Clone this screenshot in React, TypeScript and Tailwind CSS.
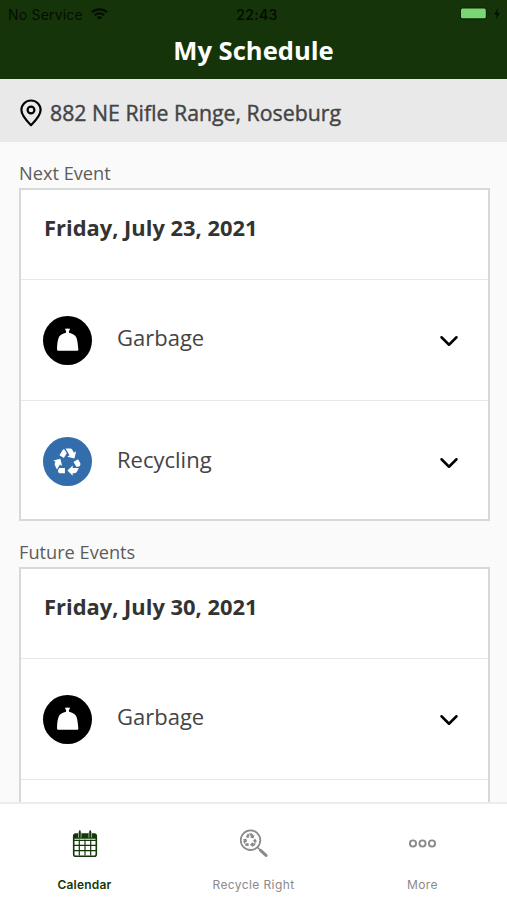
import type { ReactNode } from "react"
import { ChevronDown } from "lucide-react"
import { MdRecycling } from "react-icons/md"

type Service = "garbage" | "recycling"

interface ScheduleDay {
  date: string
  services: Service[]
}

const nextEvent: ScheduleDay = {
  date: "Friday, July 23, 2021",
  services: ["garbage", "recycling"],
}

const futureEvent: ScheduleDay = {
  date: "Friday, July 30, 2021",
  services: ["garbage"],
}

function GarbageBag() {
  return (
    <svg width="24" height="24" viewBox="0 0 24 24" fill="white">
      <path d="M8.8 0.4Q10.2 1 11.5 0.6Q12.8 1 14.2 0.4L12.9 3.4L13.1 4.8C15 5.7 18 6.1 19.8 8.4C21.6 11.2 21.9 17 22.4 21.2Q22.4 22.7 21.2 22.7H2.2Q1 22.7 1 21.2C1.1 17 1.5 11.6 3.2 8.6C5 6.1 8 5.7 10 4.8L10.2 3.4Z" />
    </svg>
  )
}

const services: Record<Service, { label: string; circle: string; icon: ReactNode }> = {
  garbage: { label: "Garbage", circle: "bg-black", icon: <GarbageBag /> },
  recycling: {
    label: "Recycling",
    circle: "bg-[#336dab]",
    icon: <MdRecycling size={31} color="white" />,
  },
}

function StatusBar() {
  return (
    <div className="grid h-7 grid-cols-3 items-center pl-2 pr-1 font-['Inter',sans-serif] text-[14px] text-black/75">
      <div className="flex items-center gap-2">
        <span className="whitespace-nowrap tracking-[0.2px]">No Service</span>
        <svg width="17" height="12" viewBox="0 0 17 12" fill="none" stroke="#050d02" strokeWidth="2.2">
          <path d="M1 4.3C5.2 0.4 11.8 0.4 16 4.3" />
          <path d="M3.8 7.3C6.5 4.8 10.5 4.8 13.2 7.3" />
          <path d="M8.5 11.8L5.9 9.2C7.4 7.9 9.6 7.9 11.1 9.2Z" fill="#050d02" stroke="none" />
        </svg>
      </div>
      <span className="pl-[3px] text-center font-semibold tracking-[0.3px]">22:43</span>
      <div className="flex items-center justify-end">
        <svg width="43" height="14" viewBox="0 0 43 14">
          <rect x="0" y="0.4" width="27" height="12" rx="3" fill="#0d2505" />
          <rect x="1" y="1.5" width="24.8" height="9.8" rx="1.5" fill="#78d774" />
          <path d="M28.6 4.5Q30.6 6.6 28.6 8.7Z" fill="#0d2505" />
          <path d="M38 1.3L34.2 7.4H36.8L36 12L40 6H37.3Z" fill="#050d02" />
        </svg>
      </div>
    </div>
  )
}

function AddressBar() {
  return (
    <div className="flex h-[63px] shrink-0 items-center bg-[#e9e9e9] pl-5 pt-1">
      <svg width="23" height="28" viewBox="0 0 23 28" fill="none" stroke="black" strokeWidth="2.2">
        <path d="M11 26.2C7 22.3 1.4 16.8 1.4 11.1A9.6 9.6 0 0 1 20.6 11.1C20.6 16.8 15 22.3 11 26.2Z" strokeLinejoin="round" />
        <circle cx="11" cy="11" r="3.4" />
      </svg>
      <span className="ml-[7px] pt-px text-[21.3px] font-medium text-[#444] [-webkit-text-stroke:0.4px]">
        882 NE Rifle Range, Roseburg
      </span>
    </div>
  )
}

function ServiceRow({ service, last }: { service: Service; last: boolean }) {
  const { label, circle, icon } = services[service]

  return (
    <div
      className={
        last
          ? "flex h-[118px] items-center px-[22px] pt-[3px]"
          : "flex h-[121px] items-center border-b border-[#e8e8e8] px-[22px]"
      }
    >
      <div className={`flex size-[49px] items-center justify-center rounded-full ${circle}`}>
        {icon}
      </div>
      <span className="ml-[25px] -mt-[5px] text-[22px] text-[#444]">{label}</span>
      <ChevronDown className="ml-auto mr-[2px] mt-[2px]" size={30} color="black" strokeWidth={2} />
    </div>
  )
}

interface ScheduleCardProps {
  title: string
  day: ScheduleDay
  grow?: boolean
}

function ScheduleCard({ title, day, grow = false }: ScheduleCardProps) {
  return (
    <section className={grow ? "flex flex-1 flex-col" : "shrink-0"}>
      <h2 className="flex h-[46px] items-end pb-[2px] text-[18.2px] leading-[26px] text-[#5c5c5c]">
        {title}
      </h2>
      <div
        className={
          grow
            ? "flex-1 border-2 border-b-0 border-[#d8d8d8] bg-white"
            : "border-2 border-[#d8d8d8] bg-white"
        }
      >
        <div className="flex h-[90px] items-center border-b border-[#e8e8e8] px-[23px] pb-3">
          <h3 className="text-[21.9px] font-bold text-[#333]">{day.date}</h3>
        </div>
        {day.services.map((service, i) => (
          <ServiceRow
            key={service}
            service={service}
            last={!grow && i === day.services.length - 1}
          />
        ))}
      </div>
    </section>
  )
}

function CalendarIcon() {
  return (
    <svg width="26" height="28" viewBox="0 0 26 28" fill="none" stroke="#16370a">
      <rect x="1.7" y="5.2" width="22.6" height="22" rx="2" strokeWidth="1.6" />
      <path d="M1.7 5.8Q1.7 4.6 3 4.6H23Q24.3 4.6 24.3 5.8V9.8H1.7Z" fill="#16370a" stroke="none" />
      <path d="M7.3 10.6V26.6M13 10.6V26.6M18.7 10.6V26.6M2 11.4H24M2 16.4H24M2 21.6H24" strokeWidth="1.2" />
      <path d="M7.8 3.1V8.6M18.2 3.1V8.6" stroke="#b3c0ae" strokeWidth="3.4" />
      <path d="M7.8 2.1V8M18.2 2.1V8" strokeWidth="1.8" strokeLinecap="round" />
    </svg>
  )
}

function RecycleSearchIcon() {
  return (
    <div className="relative h-7 w-7">
      <svg width="28" height="28" viewBox="0 0 28 28" fill="none" stroke="#8a8a8a">
        <circle cx="10.5" cy="11.2" r="9.8" strokeWidth="1.8" />
        <path d="M17.4 18.2L20.2 21" strokeWidth="1.5" />
        <path d="M20.6 21.4L26 26.4" strokeWidth="3" strokeLinecap="round" />
      </svg>
      <MdRecycling className="absolute left-[2.5px] top-[3px]" size={16} color="#8a8a8a" />
    </div>
  )
}

function MoreIcon() {
  return (
    <svg width="28" height="28" viewBox="0 0 28 28" fill="none" stroke="#8a8a8a" strokeWidth="1.9">
      <circle cx="4" cy="14.5" r="3.1" />
      <circle cx="13.5" cy="14.5" r="3.1" />
      <circle cx="23" cy="14.5" r="3.1" />
    </svg>
  )
}

const tabs = [
  { label: "Calendar", icon: <CalendarIcon />, active: true },
  { label: "Recycle Right", icon: <RecycleSearchIcon />, active: false },
  { label: "More", icon: <MoreIcon />, active: false },
]

export default function App() {
  return (
    <div className="flex h-[900px] w-[507px] flex-col overflow-hidden bg-[#fafafa] font-['Open_Sans',sans-serif]">
      <header className="h-[79px] shrink-0 bg-[#153409]">
        <StatusBar />
        <h1 className="text-center text-[25.6px] font-bold leading-[45px] text-white">My Schedule</h1>
      </header>

      <AddressBar />

      <main className="flex min-h-0 flex-1 flex-col overflow-hidden pl-[19px] pr-[17px]">
        <ScheduleCard title="Next Event" day={nextEvent} />
        <ScheduleCard title="Future Events" day={futureEvent} grow />
      </main>

      <nav className="grid h-[98px] shrink-0 grid-cols-3 border-t-2 border-[#ececec] bg-white font-['Inter',sans-serif]">
        {tabs.map((tab) => (
          <button key={tab.label} type="button" className="flex flex-col items-center pt-[25px]">
            <span className="flex h-7 items-center">{tab.icon}</span>
            <span
              className={
                tab.active
                  ? "mt-5 text-xs font-semibold tracking-[0.2px] text-[#16370a]"
                  : "mt-5 text-xs tracking-[0.4px] text-[#8a8a8a]"
              }
            >
              {tab.label}
            </span>
          </button>
        ))}
      </nav>
    </div>
  )
}
